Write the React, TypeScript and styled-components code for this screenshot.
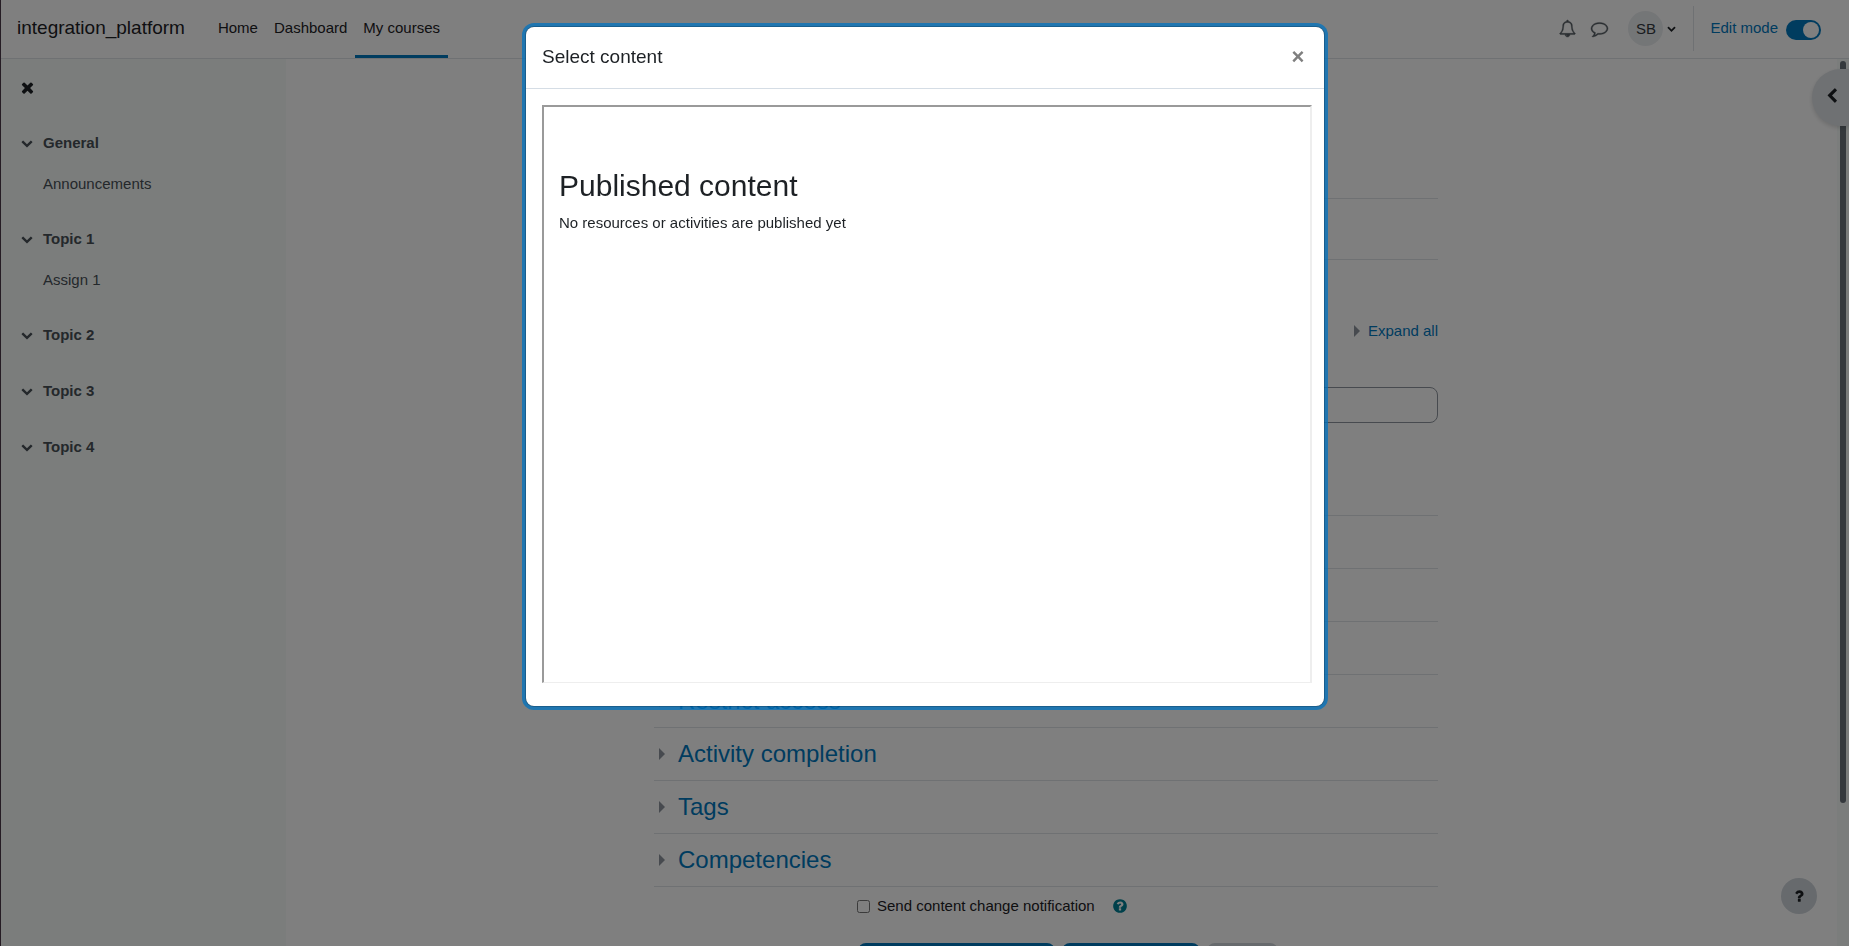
import React from "react";
import styled, { createGlobalStyle, css } from "styled-components";

const GlobalStyle = createGlobalStyle`
  *, *::before, *::after { box-sizing: border-box; }
  body {
    margin: 0;
    overflow: hidden;
    background: #fff;
    color: #1d2125;
    font: 15px/22px "Liberation Sans", Arial, sans-serif;
  }
  h1, h2, h3, p, ul { margin: 0; padding: 0; font-weight: 400; }
  ul { list-style: none; }
  a { color: inherit; text-decoration: none; }
  button, input { font: inherit; color: inherit; margin: 0; }
`;

const paths = {
  times:
    "M1490 1322q0 40-28 68l-136 136q-28 28-68 28t-68-28l-294-294-294 294q-28 28-68 28t-68-28l-136-136q-28-28-28-68t28-68l294-294-294-294q-28-28-28-68t28-68l136-136q28-28 68-28t68 28l294 294 294-294q28-28 68-28t68 28l136 136q28 28 28 68t-28 68l-294 294 294 294q28 28 28 68z",
  down: "M1683 808l-742 741q-19 19-45 19t-45-19l-742-741q-19-19-19-45.5t19-45.5l166-165q19-19 45-19t45 19l531 531 531-531q19-19 45-19t45 19l166 165q19 19 19 45.5t-19 45.5z",
  left: "M1427 301l-531 531 531 531q19 19 19 45t-19 45l-166 166q-19 19-45 19t-45-19l-742-742q-19-19-19-45t19-45l742-742q19-19 45-19t45 19l166 166q19 19 19 45t-19 45z",
  bell: "M912 1696q0-16-16-16-59 0-101.5-42.5t-42.5-101.5q0-16-16-16t-16 16q0 73 51.5 124.5t124.5 51.5q16 0 16-16zm-666-288h1300q-266-300-266-832 0-51-24-105t-69-103-121.5-80.5-169.5-31.5-169.5 31.5-121.5 80.5-69 103-24 105q0 532-266 832zm1482 0q0 52-38 90t-90 38h-448q0 106-75 181t-181 75-181-75-75-181h-448q-52 0-90-38t-38-90q50-42 91-88t85-119.5 74.5-158.5 50-206 19.5-260q0-152 117-282.5t307-158.5q-8-19-8-39 0-40 28-68t68-28 68 28 28 68q0 20-8 39 190 28 307 158.5t117 282.5q0 139 19.5 260t50 206 74.5 158.5 85 119.5 91 88z",
  comment:
    "M896 384q-204 0-381.5 69.5t-282 187.5-104.5 255q0 112 71.5 213.5t201.5 175.5l87 50-27 96q-24 91-70 172 152-63 275-171l43-38 57 6q69 8 130 8 204 0 381.5-69.5t282-187.5 104.5-255-104.5-255-282-187.5-381.5-69.5zm896 512q0 174-120 321.5t-326 233-450 85.5q-70 0-145-8-198 175-460 242-49 14-114 22h-5q-15 0-27-10.5t-16-27.5v-1q-3-4-.5-12t2-10 4.5-9.5l6-9 7-8.5 8-9q7-8 31-34.5t34.5-38 31-39.5 32.5-51 27-59 26-76q-157-89-247.5-220t-90.5-281q0-174 120-321.5t326-233 450-85.5 450 85.5 326 233 120 321.5z",
  questionCircle:
    "M1024 1376v-192q0-14-9-23t-23-9h-192q-14 0-23 9t-9 23v192q0 14 9 23t23 9h192q14 0 23-9t9-23zm256-672q0-88-55.5-163t-138.5-116-170-41q-243 0-371 213-15 24 8 42l132 100q7 6 19 6 16 0 25-12 53-68 86-92 34-24 86-24 48 0 85.5 26t37.5 59q0 38-20 61t-68 45q-63 28-115.5 86.5t-52.5 125.5v36q0 14 9 23t23 9h192q14 0 23-9t9-23q0-19 21.5-49.5t54.5-49.5q32-18 49-28.5t46-35 44.5-48 28-60.5 12.5-81zm384 192q0 209-103 385.5t-279.5 279.5-385.5 103-385.5-103-279.5-279.5-103-385.5 103-385.5 279.5-279.5 385.5-103 385.5 103 279.5 279.5 103 385.5z",
  question:
    "M1088 1256v240q0 16-12 28t-28 12h-240q-16 0-28-12t-12-28v-240q0-16 12-28t28-12h240q16 0 28 12t12 28zm316-600q0 54-15.5 101t-35 76.5-55 59.5-57.5 43.5-61 35.5q-41 23-68.5 65t-27.5 67q0 17-12 32.5t-28 15.5h-240q-15 0-25.5-18.5t-10.5-37.5v-45q0-83 65-156.5t143-108.5q59-27 84-56t25-76q0-42-46.5-74t-107.5-32q-65 0-108 29-35 25-107 115-13 16-31 16-12 0-25-8l-164-125q-13-10-15.5-25t5.5-28q160-266 464-266 80 0 161 31t146 83 106 127.5 41 158.5z",
  caret: "M450 0l896 896-896 896z",
};

const Icon = ({ name, size }: { name: keyof typeof paths; size: number }) => (
  <svg width={size} height={size} viewBox="0 0 1792 1792" fill="currentColor" overflow="visible" aria-hidden="true">
    <path d={paths[name]} />
  </svg>
);

const blue = "#0078be";
const line = "#dee2e6";

const Screen = styled.div`
  display: flex;
  flex-direction: column;
  height: 100vh;
  overflow: hidden;
  border-left: 1px solid #251c24;
`;

const plainButton = css`
  display: flex;
  align-items: center;
  justify-content: center;
  padding: 0;
  border: 0;
  background: none;
`;

const TopBar = styled.header`
  display: flex;
  flex: none;
  height: 59px;
  padding: 0 28px 0 16px;
  border-bottom: 1px solid ${line};
`;

const Brand = styled.a`
  margin-right: 25px;
  font-size: 19px;
  line-height: 56px;
`;

const Nav = styled.nav`
  display: flex;
  flex: 1;
`;

const NavLink = styled.a<{ $active?: boolean }>`
  padding: 0 8px;
  line-height: 56px;
  border-bottom: 3px solid ${(p) => (p.$active ? blue : "transparent")};
`;

const Tools = styled.div`
  display: flex;
  align-items: center;
  padding-bottom: 2px;
`;

const ToolButton = styled.button`
  ${plainButton}
  width: 32px;
  height: 40px;
  color: #555c63;
  svg {
    stroke: currentColor;
    stroke-width: 40px;
  }
`;

const UserMenu = styled.button`
  ${plainButton}
  gap: 4px;
  margin: 0 17px 0 13px;
`;

const Avatar = styled.span`
  width: 35px;
  border-radius: 50%;
  background: #e9ecef;
  color: #343a40;
  line-height: 35px;
  text-align: center;
`;

const EditMode = styled.label`
  display: flex;
  align-items: center;
  gap: 8px;
  height: 45px;
  padding-left: 16px;
  border-left: 1px solid ${line};
  color: ${blue};
`;

const Switch = styled.input`
  appearance: none;
  display: flex;
  justify-content: flex-end;
  width: 35px;
  height: 20px;
  padding: 2px;
  margin-top: 3px;
  border-radius: 10px;
  background: ${blue};
  &::after {
    content: "";
    width: 16px;
    height: 16px;
    border-radius: 50%;
    background: #fff;
  }
`;

const Body = styled.div`
  display: flex;
  flex: 1;
  min-height: 0;
`;

const Drawer = styled.aside`
  flex: none;
  width: 285px;
  padding: 12px 16px;
  background: #f6fbf9;
  color: #495057;
`;

const DrawerClose = styled.button`
  ${plainButton}
  width: 20px;
  height: 32px;
  color: #1d2125;
`;

const SectionList = styled.ul`
  display: flex;
  flex-direction: column;
  gap: 16px;
  padding: 20px 0 0 4px;
`;

const CourseSection = styled.li`
  display: flex;
  flex-direction: column;
  gap: 2px;
`;

const SectionToggle = styled.button`
  ${plainButton}
  justify-content: flex-start;
  gap: 10px;
  height: 40px;
  font-weight: 700;
`;

const ActivityLink = styled.a`
  padding-left: 22px;
  line-height: 38px;
`;

const Main = styled.main`
  flex: 1;
  min-width: 0;
  padding-right: 31px;
  overflow: hidden;
`;

const Column = styled.div`
  max-width: 784px;
  margin: 0 auto;
`;

const PageHead = styled.div`
  height: 140px;
  border-bottom: 1px solid ${line};
`;

const PageTabs = styled.div`
  height: 61px;
  border-bottom: 1px solid ${line};
`;

const ExpandRow = styled.div`
  display: flex;
  justify-content: flex-end;
  padding: 60px 0 0;
`;

const ExpandLink = styled.a`
  display: flex;
  align-items: center;
  gap: 5px;
  color: ${blue};
  svg { color: #8f959e; }
`;

const GeneralFields = styled.div`
  height: 174px;
  padding-top: 45px;
  border-bottom: 1px solid ${line};
`;

const FieldRow = styled.div`
  display: grid;
  grid-template-columns: 204px 1fr;
  align-items: center;
`;

const TextField = styled.input`
  width: 100%;
  height: 36px;
  padding: 6px 12px;
  border: 1px solid #8f959e;
  border-radius: 8px;
  background: #fff;
`;

const FormSection = styled.h3`
  border-bottom: 1px solid ${line};
  color: ${blue};
  font-size: 24px;
  line-height: 52px;
`;

const FormToggle = styled.a`
  display: flex;
  align-items: center;
  gap: 10px;
  padding-left: 2px;
  svg { color: #8f959e; }
`;

const NotifyRow = styled.div`
  display: flex;
  align-items: center;
  gap: 7px;
  padding: 8px 0 0 203px;
`;

const Tick = styled.input`
  width: 13px;
  height: 13px;
`;

const HelpLink = styled.button`
  ${plainButton}
  margin-left: 10px;
  color: #008196;
`;

const Actions = styled.div`
  display: flex;
  gap: 7px;
  padding: 26px 0 0 204px;
`;

const ActionButton = styled.button<{ $plain?: boolean }>`
  padding: 7px 12px;
  border: 0;
  border-radius: 8px;
  background: ${(p) => (p.$plain ? "#ced4da" : blue)};
  color: ${(p) => (p.$plain ? "#1d2125" : "#fff")};
`;

const ScrollTrack = styled.div`
  flex: none;
  width: 12px;
  padding: 2px 3px;
  background: #f6fbf9;
`;

const ScrollThumb = styled.div`
  height: 84%;
  border-radius: 3px;
  background: #6a737b;
`;

const BlocksToggle = styled.button`
  ${plainButton}
  position: fixed;
  top: 69px;
  right: 0;
  width: 37px;
  height: 57px;
  padding: 0 0 3px 3px;
  border-radius: 29px 0 0 29px;
  background: #dee2e6;
  box-shadow: 0 2px 4px rgba(0, 0, 0, 0.15);
`;

const HelpBubble = styled.button`
  ${plainButton}
  position: fixed;
  right: 32px;
  bottom: 32px;
  width: 36px;
  height: 36px;
  border-radius: 50%;
  background: #ced4da;
`;

const Backdrop = styled.div`
  position: fixed;
  inset: 0 0 0 1px;
  display: flex;
  align-items: flex-start;
  justify-content: center;
  padding: 26px 0;
  background: rgba(0, 0, 0, 0.5);
`;

const Dialog = styled.section`
  width: 800px;
  max-width: 100%;
  border: 1px solid rgba(0, 0, 0, 0.2);
  border-radius: 9px;
  background: #fff;
  background-clip: padding-box;
  box-shadow: 0 0 0 3px rgba(0, 115, 192, 0.75);
`;

const DialogHead = styled.header`
  display: flex;
  align-items: center;
  justify-content: space-between;
  height: 62px;
  padding: 0 18px 2px 16px;
  border-bottom: 1px solid #d5dde5;
`;

const DialogTitle = styled.h2`
  font-size: 19px;
  line-height: 28px;
`;

const DialogClose = styled.button`
  ${plainButton}
  width: 16px;
  height: 24px;
  color: #7f7f7f;
  font-size: 22px;
  font-weight: 700;
  line-height: 24px;
`;

const DialogBody = styled.div`
  padding: 16px 12px 23px 16px;
`;

const Frame = styled.div`
  min-height: 578px;
  padding: 61px 15px;
  border: 2px solid #eee;
  border-top-color: #9a9a9a;
  border-left-color: #9a9a9a;
  border-bottom-width: 1px;
`;

const FrameTitle = styled.h2`
  margin-bottom: 8px;
  font-size: 30px;
  line-height: 36px;
`;

const courseSections = [
  { title: "General", items: ["Announcements"] },
  { title: "Topic 1", items: ["Assign 1"] },
  { title: "Topic 2", items: [] },
  { title: "Topic 3", items: [] },
  { title: "Topic 4", items: [] },
];

const formSections = [
  "Privacy",
  "Grade",
  "Common module settings",
  "Restrict access",
  "Activity completion",
  "Tags",
  "Competencies",
];

export default function App() {
  return (
    <Screen>
      <GlobalStyle />
      <TopBar>
        <Brand href="#">integration_platform</Brand>
        <Nav>
          <NavLink href="#">Home</NavLink>
          <NavLink href="#">Dashboard</NavLink>
          <NavLink href="#" $active>My courses</NavLink>
        </Nav>
        <Tools>
          <ToolButton aria-label="Notifications"><Icon name="bell" size={17} /></ToolButton>
          <ToolButton aria-label="Messages"><Icon name="comment" size={17} /></ToolButton>
          <UserMenu aria-label="User menu">
            <Avatar>SB</Avatar>
            <Icon name="down" size={9} />
          </UserMenu>
          <EditMode>
            Edit mode
            <Switch type="checkbox" defaultChecked />
          </EditMode>
        </Tools>
      </TopBar>

      <Body>
        <Drawer>
          <DrawerClose aria-label="Close course index"><Icon name="times" size={17} /></DrawerClose>
          <SectionList>
            {courseSections.map((s) => (
              <CourseSection key={s.title}>
                <SectionToggle>
                  <Icon name="down" size={12} />
                  {s.title}
                </SectionToggle>
                {s.items.map((item) => (
                  <ActivityLink href="#" key={item}>{item}</ActivityLink>
                ))}
              </CourseSection>
            ))}
          </SectionList>
        </Drawer>

        <Main>
          <Column>
            <PageHead />
            <PageTabs />
            <ExpandRow>
              <ExpandLink href="#"><Icon name="caret" size={12} />Expand all</ExpandLink>
            </ExpandRow>
            <GeneralFields>
              <FieldRow>
                <label htmlFor="name">Activity name</label>
                <TextField id="name" type="text" />
              </FieldRow>
            </GeneralFields>
            {formSections.map((title) => (
              <FormSection key={title}>
                <FormToggle href="#"><Icon name="caret" size={12} />{title}</FormToggle>
              </FormSection>
            ))}
            <NotifyRow>
              <Tick type="checkbox" id="notify" />
              <label htmlFor="notify">Send content change notification</label>
              <HelpLink aria-label="Help"><Icon name="questionCircle" size={16} /></HelpLink>
            </NotifyRow>
            <Actions>
              <ActionButton>Save and return to course</ActionButton>
              <ActionButton>Save and display</ActionButton>
              <ActionButton $plain>Cancel</ActionButton>
            </Actions>
          </Column>
        </Main>
        <ScrollTrack><ScrollThumb /></ScrollTrack>
      </Body>

      <BlocksToggle aria-label="Open block drawer"><Icon name="left" size={16} /></BlocksToggle>
      <HelpBubble aria-label="Show footer"><Icon name="question" size={16} /></HelpBubble>

      <Backdrop>
        <Dialog role="dialog" aria-modal="true" aria-labelledby="dialog-title">
          <DialogHead>
            <DialogTitle id="dialog-title">Select content</DialogTitle>
            <DialogClose aria-label="Close">×</DialogClose>
          </DialogHead>
          <DialogBody>
            <Frame>
              <FrameTitle>Published content</FrameTitle>
              <p>No resources or activities are published yet</p>
            </Frame>
          </DialogBody>
        </Dialog>
      </Backdrop>
    </Screen>
  );
}
